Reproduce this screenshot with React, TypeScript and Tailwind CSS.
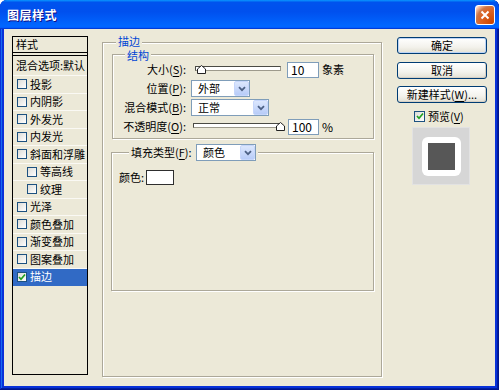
import React from "react";

function Cb({ checked, size = "s" }: { checked?: boolean; size?: "s" | "m" }) {
  return (
    <span
      className={
        (size === "s" ? "w-[10px] h-[10px] " : "w-[11px] h-[11px] ") +
        "shrink-0 border border-[#1C5180] bg-[linear-gradient(135deg,#DCDCD7,#FFFFFF)] flex items-center justify-center"
      }
    >
      {checked && (
        <svg width="8" height="8" viewBox="0 0 8 8">
          <path d="M1 4 L3 6.2 L7 1.5" stroke="#21A121" strokeWidth="1.7" fill="none" />
        </svg>
      )}
    </span>
  );
}

function Thumb({ className }: { className: string }) {
  return (
    <svg className={className} width="9" height="9" viewBox="0 0 9 9">
      <polygon points="4.5,0.5 8.5,4 8.5,8.5 0.5,8.5 0.5,4" fill="#FFFFFF" stroke="#222" strokeWidth="1" />
    </svg>
  );
}

function Slider({ className, right }: { className: string; right?: boolean }) {
  return (
    <div className={"relative h-[9px] " + className}>
      <div className="mt-[1px] h-[5px] border border-[#4A4A44] border-b-[#9D9A8C] border-r-[#9D9A8C] bg-white" />
      <Thumb className={right ? "absolute top-0 right-[-4px]" : "absolute top-0 left-[2px]"} />
    </div>
  );
}

function Input({ className, value }: { className: string; value: string }) {
  return (
    <div className={"h-[16px] border border-[#7F9DB9] bg-white pl-[3px] flex items-center leading-[13px] text-[12px] " + className}>
      {value}
    </div>
  );
}

function Select({ className, text }: { className: string; text: string }) {
  return (
    <div className={"h-[17px] border border-[#7F9DB9] bg-white flex items-center " + className}>
      <span className="flex-1 pl-[6px] leading-[13px]">{text}</span>
      <span className="w-[15px] h-[15px] border border-[#C6D6FB] rounded-[2px] bg-[linear-gradient(#DCE7FD,#B8CCF8)] flex items-center justify-center">
        <svg width="8" height="6" viewBox="0 0 8 6">
          <path d="M1 1.2 L4 4.2 L7 1.2" stroke="#4D6185" strokeWidth="1.8" fill="none" />
        </svg>
      </span>
    </div>
  );
}

function Btn({ children, def }: { children: React.ReactNode; def?: boolean }) {
  return (
    <div
      className={
        "h-[17px] w-[90px] rounded-[3px] border border-[#003C74] bg-[linear-gradient(#FFFFFF,#F3F2EC_60%,#E3E0D3)] flex items-center justify-center leading-[13px] whitespace-nowrap " +
        (def ? "shadow-[inset_0_0_0_1px_#BCD4F6]" : "shadow-[inset_-1px_-1px_0_#D6D0C5]")
      }
    >
      {children}
    </div>
  );
}

const items: { t: string; ind?: boolean; sel?: boolean }[] = [
  { t: "投影" },
  { t: "内阴影" },
  { t: "外发光" },
  { t: "内发光" },
  { t: "斜面和浮雕" },
  { t: "等高线", ind: true },
  { t: "纹理", ind: true },
  { t: "光泽" },
  { t: "颜色叠加" },
  { t: "渐变叠加" },
  { t: "图案叠加" },
  { t: "描边", sel: true },
];

const etched = "border border-[#ACA899] shadow-[inset_1px_1px_0_#FFFFFF,1px_1px_0_#FFFFFF]";

export default function App() {
  return (
    <div className="w-[499px] h-[390px] bg-white font-['Noto_Sans_CJK_SC','Noto_Sans',sans-serif] text-[11px] text-black">
      <div className="w-[499px] h-[390px] rounded-t-[7px] overflow-hidden bg-[#0831D9] shadow-[inset_-1px_-1px_0_#00138C,inset_1px_1px_0_#0831D9,inset_-2px_-2px_0_#001EA0,inset_2px_2px_0_#166AEE] flex flex-col">
        {/* title bar */}
        <div className="h-[29px] shrink-0 flex items-center pl-[7px] pr-[4px] bg-[linear-gradient(180deg,#0997FF,#0053EE_8%,#0050EE_40%,#0066FF_88%,#0066FF_93%,#005BFF_95%,#003DD7_96%,#003DD7)]">
          <span className="text-white font-bold text-[12px] tracking-[0.5px] leading-[16px] [text-shadow:1px_1px_0_#0F1089]">图层样式</span>
          <div className="ml-auto w-[20px] h-[20px] rounded-[3px] border border-white bg-[radial-gradient(circle_at_90%_90%,#CC4600_0%,#DC6527_55%,#CD7546_70%,#FFCCB2_90%,#FFFFFF_100%)] flex items-center justify-center">
            <svg width="10" height="10" viewBox="0 0 10 10">
              <path d="M1.5 1.5 L8.5 8.5 M8.5 1.5 L1.5 8.5" stroke="#FFFFFF" strokeWidth="2" />
            </svg>
          </div>
        </div>
        {/* body */}
        <div className="flex-1 mx-[4px] mb-[4px] bg-[#ECE9D8] flex items-start pl-[8px]">
          {/* style list */}
          <div className="mt-[7px] w-[76px] h-[339px] border border-black overflow-hidden flex flex-col">
            <div className="h-[15px] pl-[3px] flex items-center leading-[13px]">样式</div>
            <div className="h-[4px] border-y border-black" />
            <div className="h-[20px] pl-[3px] flex items-center whitespace-nowrap border-b border-[#FAF9F4] leading-[13px]">混合选项:默认</div>
            {items.map((it) => (
              <div
                key={it.t}
                className={
                  "h-[17.5px] flex items-center gap-[3px] whitespace-nowrap leading-[13px] border-b " +
                  (it.ind ? "pl-[14px] " : "pl-[4px] ") +
                  (it.sel ? "bg-[#316AC5] text-white border-[#316AC5]" : "border-[#FAF9F4]")
                }
              >
                <Cb checked={it.sel} />
                <span>{it.t}</span>
              </div>
            ))}
          </div>

          {/* main group */}
          <div className={"relative ml-[14px] mt-[13px] w-[280px] h-[335px] " + etched}>
            <span className="absolute left-[13px] top-[-8px] px-[2px] bg-[#ECE9D8] text-[#0046D5] leading-[12px]">描边</span>

            {/* structure group */}
            <div className={"relative ml-[9px] mt-[11px] w-[262px] h-[85px] pt-[5px] " + etched}>
              <span className="absolute left-[12px] top-[-6px] px-[2px] bg-[#ECE9D8] text-[#0046D5] leading-[12px]">结构</span>
              <div className="flex items-center h-[19px]">
                <span className="w-[73px] text-right leading-[13px] whitespace-nowrap">
                  大小(<span className="underline underline-offset-2">S</span>):
                </span>
                <Slider className="ml-[9px] w-[86px]" />
                <Input className="ml-[6px] w-[32px]" value="10" />
                <span className="ml-[3px] leading-[13px]">象素</span>
              </div>
              <div className="flex items-center h-[19px]">
                <span className="w-[73px] text-right leading-[13px] whitespace-nowrap">
                  位置(<span className="underline underline-offset-2">P</span>):
                </span>
                <Select className="ml-[5px] w-[59px]" text="外部" />
              </div>
              <div className="flex items-center h-[19px]">
                <span className="w-[73px] text-right leading-[13px] whitespace-nowrap">
                  混合模式(<span className="underline underline-offset-2">B</span>):
                </span>
                <Select className="ml-[5px] w-[78px]" text="正常" />
              </div>
              <div className="flex items-center h-[19px]">
                <span className="w-[73px] text-right leading-[13px] whitespace-nowrap">
                  不透明度(<span className="underline underline-offset-2">O</span>):
                </span>
                <Slider className="ml-[7px] w-[88px]" right />
                <Input className="ml-[7px] w-[31px]" value="100" />
                <span className="ml-[3px] leading-[13px] text-[12px]">%</span>
              </div>
            </div>

            {/* fill group */}
            <div className={"relative ml-[8px] mt-[13px] w-[263px] h-[139px] pl-[7px] pt-[17px] " + etched}>
              <div className="absolute left-[17px] top-[-9px] px-[2px] bg-[#ECE9D8] flex items-center gap-[2px]">
                <span className="w-[63px] leading-[13px] whitespace-nowrap">
                  填充类型(<span className="underline underline-offset-2">F</span>):
                </span>
                <Select className="w-[60px]" text="颜色" />
              </div>
              <div className="flex items-center">
                <span className="w-[27px] leading-[13px] whitespace-nowrap">颜色:</span>
                <div className="w-[28px] h-[15px] border border-[#2E2E2E] bg-white" />
              </div>
            </div>
          </div>

          {/* right column */}
          <div className="ml-[15px] mt-[8px] w-[90px] flex flex-col">
            <Btn def>确定</Btn>
            <div className="mt-[8px]">
              <Btn>取消</Btn>
            </div>
            <div className="mt-[7px]">
              <Btn>
                新建样式(<span className="underline underline-offset-2">W</span>)...
              </Btn>
            </div>
            <div className="mt-[6px] h-[14px] pl-[17px] flex items-center gap-[3px]">
              <Cb checked size="m" />
              <span className="leading-[13px] whitespace-nowrap">
                预览(<span className="underline underline-offset-2">V</span>)
              </span>
            </div>
            <div className="mt-[4px] ml-[15px] w-[58px] h-[58px] bg-[#D6D6D6] border border-[#E2E2E2] flex items-center justify-center">
              <div className="w-[39px] h-[39px] rounded-[6px] bg-white flex items-center justify-center">
                <div className="w-[27px] h-[27px] bg-[#575757]" />
              </div>
            </div>
          </div>
        </div>
      </div>
    </div>
  );
}
